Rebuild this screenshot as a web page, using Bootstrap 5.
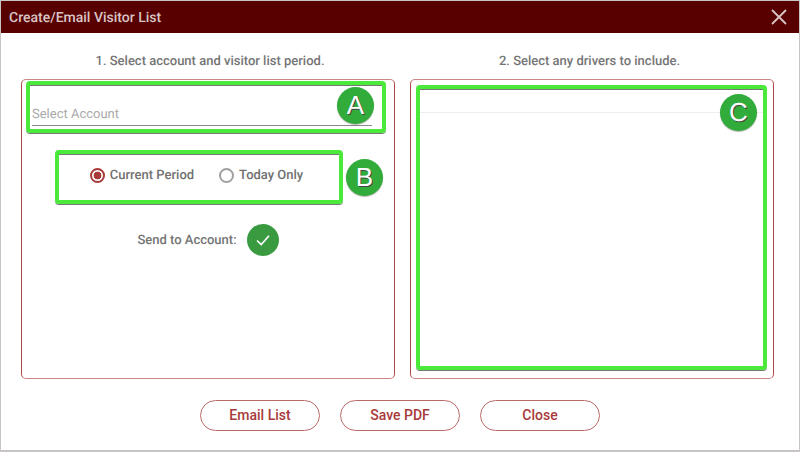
<!DOCTYPE html>
<html lang="en">
<head>
<meta charset="utf-8">
<title>Create/Email Visitor List</title>
<link rel="stylesheet" href="https://cdn.jsdelivr.net/npm/bootstrap@5.3.0/dist/css/bootstrap.min.css">
<style>
html,body{height:452px;overflow:hidden}
body{background:#c9c4c4;font-family:Roboto,"Liberation Sans",sans-serif;color:#666;padding:1px 1px 2px 1px;text-rendering:geometricPrecision}
.dlg{height:449px;background:#fff;position:relative;border-radius:2px 2px 0 0}
.dlg-head{height:32px;background:#580000;color:#d9c6c6;font-size:14px;font-weight:500;padding:0 8px}
.dlg-title{padding-top:2px}
.dlg-x{width:16px;height:16px;margin-right:4px;display:block}
.dlg-cols{padding:0 25px 0 20px;gap:15px}
.col-l{width:374px}
.col-r{width:364px}
.step{height:46px;padding-top:19px;font-size:13px;font-weight:500;line-height:19px;color:#757575;text-align:center}
.step-l{padding-left:4px}
.step-r{padding-right:5px}
.pane{height:300px;border:1px solid #b04a4a;border-radius:5px;border-bottom-color:#c98787;border-top-color:#c98787}
.acct{margin:24px 22px 0 10px;height:22px;border-bottom:1px solid #8a8a8a;color:#aaa;font-size:13px;line-height:22px}
.periods{margin-top:39px;padding-right:23px;font-size:13px;font-weight:500;line-height:18px;gap:25px;color:#707070}
.periods label{margin:0}
.lbl{padding-top:2px}
.rad{width:15px;height:15px;border-radius:50%;border:2px solid #a0a0a0;display:block;margin-right:5px;flex:none}
.rad.on{border-color:#a93a3a;background:radial-gradient(circle,#a93a3a 0 3.6px,#fff 4.2px)}
.sendrow{margin-top:39px;font-size:13px;font-weight:500;color:#757575;gap:10px}
.okdot{width:32px;height:32px;border-radius:50%;background:#3a9a40}
.drvline{margin:32px 10px 0 9px;height:1px;background:#eeeeee}
.foot{margin-top:21px;gap:20px}
.pill{width:120px;height:31px;border:1px solid #bb6a6a;border-radius:16px;background:#fff;color:#a83a3a;font-size:14px;font-weight:500;padding:0;line-height:29px}
.pill:hover{border-color:#bb6a6a;background:#fff;color:#a83a3a}
.hilite{position:absolute;border:4px solid #4bea3a;border-radius:4px;box-shadow:inset 0 1px 0 #777,0 1px 0 #777}
.hl-a{left:25px;top:80px;width:360px;height:52px}
.hl-b{left:54px;top:149px;width:288px;height:54px}
.hl-c{left:415px;top:84px;width:351px;height:285px}
.tag{position:absolute;width:37px;height:37px;border-radius:50%;background:#31ac3a;color:#fff;font-family:"Liberation Sans",Arial,sans-serif;font-size:26px;line-height:37px;text-align:center;box-shadow:0 1px 1px rgba(0,0,0,.3);text-shadow:1px 1px 0 #444}
.tg-a{left:336px;top:86px}
.tg-b{left:345px;top:158px}
.tg-c{left:719px;top:93px}
</style>
</head>
<body>
<div class="dlg">
  <div class="dlg-head d-flex align-items-center justify-content-between">
    <span class="dlg-title">Create/Email Visitor List</span>
    <svg class="dlg-x" viewBox="0 0 16 16"><path d="M1 1 15 15M15 1 1 15" stroke="#d9c6c6" stroke-width="1.8" fill="none"/></svg>
  </div>
  <div class="dlg-cols d-flex">
    <div class="col-l">
      <div class="step step-l">1. Select account and visitor list period.</div>
      <div class="pane">
        <div class="acct">Select Account</div>
        <div class="periods d-flex justify-content-center align-items-center">
          <label class="d-flex align-items-center"><span class="rad on"></span><span class="lbl">Current Period</span></label>
          <label class="d-flex align-items-center"><span class="rad"></span><span class="lbl">Today Only</span></label>
        </div>
        <div class="sendrow d-flex justify-content-center align-items-center">
          <span class="lbl">Send to Account:</span>
          <span class="okdot d-flex align-items-center justify-content-center">
            <svg width="16" height="16" viewBox="0 0 16 16"><path d="M2 8.5 6.2 12.5 14 3.8" stroke="#fff" stroke-width="1.7" fill="none"/></svg>
          </span>
        </div>
      </div>
    </div>
    <div class="col-r">
      <div class="step step-r">2. Select any drivers to include.</div>
      <div class="pane">
        <div class="drvline"></div>
      </div>
    </div>
  </div>
  <div class="foot d-flex justify-content-center">
    <button type="button" class="btn pill">Email List</button>
    <button type="button" class="btn pill">Save PDF</button>
    <button type="button" class="btn pill">Close</button>
  </div>
  <div class="hilite hl-a"></div>
  <div class="hilite hl-b"></div>
  <div class="hilite hl-c"></div>
  <div class="tag tg-a">A</div>
  <div class="tag tg-b">B</div>
  <div class="tag tg-c">C</div>
</div>
<script src="https://cdn.jsdelivr.net/npm/bootstrap@5.3.0/dist/js/bootstrap.bundle.min.js"></script>
</body>
</html>
